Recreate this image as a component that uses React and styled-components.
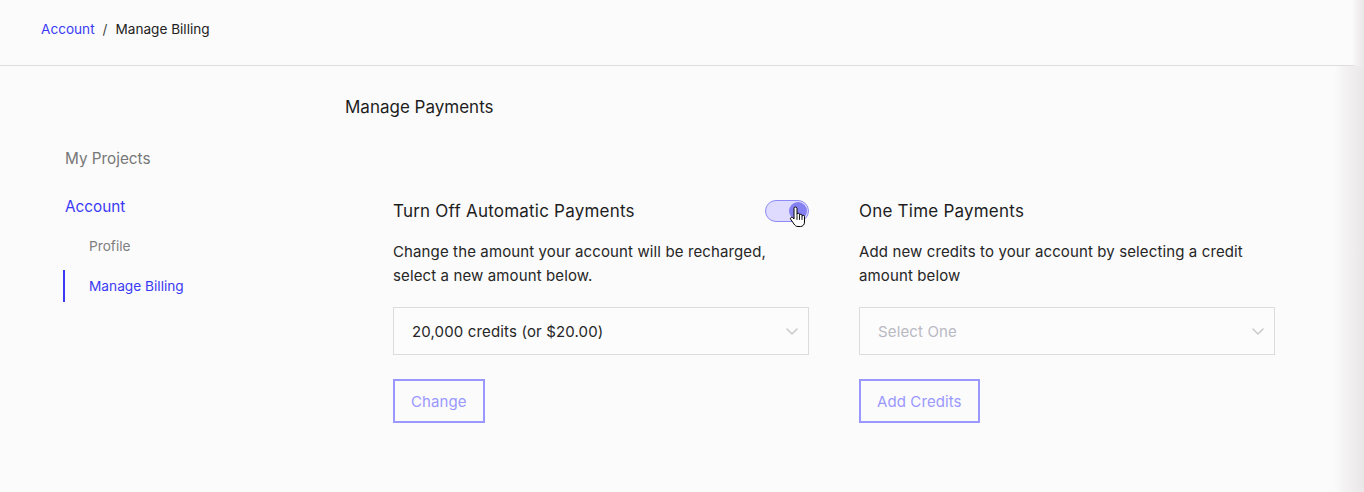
import styled, { createGlobalStyle } from "styled-components";

const GlobalStyle = createGlobalStyle`
  html, body {
    margin: 0;
    padding: 0;
    background: #fbfbfb;
    font-family: Inter, "Liberation Sans", sans-serif;
    -webkit-font-smoothing: antialiased;
  }
  * { box-sizing: border-box; }
`;

const BLUE = "#3a3af4";
const SOFT = "#9a98ff";

const Page = styled.div`
  position: relative;
  width: 1364px;
  height: 492px;
  overflow: hidden;
  background: #fbfbfb;
`;

const Header = styled.header`
  height: 66px;
  border-bottom: 1px solid #dddddd;
  display: flex;
  align-items: center;
  padding: 0 0 8px 41px;
  font-size: 13.6px;
  color: #222;
`;

const Crumb = styled.span`
  color: ${(p) => (p.$link ? BLUE : "#222")};
`;

const Slash = styled.span`
  margin: 0 8px;
  color: #444;
`;

const Body = styled.div`
  display: flex;
`;

const Sidebar = styled.nav`
  width: 345px;
  padding: 83px 0 0 63px;
  display: flex;
  flex-direction: column;
`;

const NavHeading = styled.div`
  font-size: 15.3px;
  line-height: 20px;
  padding-left: 2px;
  margin-bottom: ${(p) => p.$mb || 0}px;
  color: ${(p) => (p.$active ? BLUE : "#777")};
`;

const NavItem = styled.div`
  font-size: 13.7px;
  line-height: 20px;
  padding: 6px 0 6px 24px;
  border-left: 2px solid ${(p) => (p.$active ? BLUE : "transparent")};
  color: ${(p) => (p.$active ? BLUE : "#808080")};
  margin-top: ${(p) => p.$mt || 0}px;
`;

const Main = styled.main`
  flex: 1;
  padding-top: 31px;
`;

const PageTitle = styled.h1`
  margin: 0;
  font-size: 17px;
  line-height: 20px;
  font-weight: 400;
  color: #1e1e1e;
`;

const Columns = styled.div`
  display: grid;
  grid-template-columns: 416px 416px;
  column-gap: 50px;
  margin: 83px 0 0 48px;
`;

const Column = styled.section`
  display: flex;
  flex-direction: column;
  align-items: flex-start;
`;

const TitleRow = styled.div`
  position: relative;
  width: 100%;
  height: 22px;
  display: flex;
  align-items: center;
  justify-content: space-between;
`;

const ColumnTitle = styled.h2`
  margin: 0;
  font-size: 17px;
  letter-spacing: 0.22px;
  font-weight: 400;
  color: #1e1e1e;
`;

const Toggle = styled.div`
  width: 44px;
  height: 22px;
  border-radius: 11px;
  border: 1px solid #8e8bf6;
  background: #dedbff;
  display: flex;
  align-items: center;
  justify-content: flex-end;
  padding: 1px;
`;

const Knob = styled.div`
  width: 18px;
  height: 18px;
  border-radius: 50%;
  background: #8581f2;
`;

const Cursor = styled.svg`
  position: absolute;
  right: 3px;
  top: 6px;
`;

const Description = styled.p`
  margin: 18px 0 0;
  font-size: 15px;
  letter-spacing: 0.12px;
  line-height: 24px;
  color: #262626;
`;

const Select = styled.div`
  width: 100%;
  height: 48px;
  margin-top: 19px;
  border: 1px solid #dcdcdc;
  background: #fcfcfc;
  display: flex;
  align-items: center;
  justify-content: space-between;
  padding: 0 9px 0 18px;
  font-size: 15px;
  letter-spacing: 0.15px;
  color: ${(p) => (p.$placeholder ? "#b9b9c3" : "#262626")};
`;

const Button = styled.button`
  margin-top: 24px;
  height: 44px;
  padding: 0 16px;
  border: 2px solid ${SOFT};
  background: transparent;
  font-family: inherit;
  font-size: 15px;
  letter-spacing: 0.1px;
  color: ${SOFT};
  cursor: pointer;
`;

const EdgeShade = styled.div`
  position: absolute;
  top: ${(p) => p.$top}px;
  bottom: ${(p) => p.$bottom}px;
  right: 0;
  width: ${(p) => p.$w}px;
  background: linear-gradient(to right, rgba(235, 233, 234, 0), #f3f1f2 40%, #e9e7e8);
  pointer-events: none;
`;

function Chevron() {
  return (
    <svg width="14" height="14" viewBox="0 0 14 14" fill="none">
      <path d="M2 5l5 5 5-5" stroke="#cbcbcb" strokeWidth="1.6" strokeLinecap="round" strokeLinejoin="round" />
    </svg>
  );
}

function HandCursor() {
  return (
    <Cursor width="17" height="22" viewBox="0 0 17 22">
      <path
        d="M5 2.5a1.5 1.5 0 0 1 3 0V8.5a1.25 1.25 0 0 1 2.5 0V9.5a1.25 1.25 0 0 1 2.5 0V10.5a1.25 1.25 0 0 1 2.5 0V16c0 2.6-1.6 4.5-4 4.5H9c-2 0-3-1-4-2.5L1.6 13.2a1.3 1.3 0 0 1 2-1.6L5 13Z"
        fill="#fff"
        stroke="#000"
        strokeWidth="1"
        strokeLinejoin="round"
      />
      <path d="M8 9.5v4M10.5 10v3.5M13 11v2.5" stroke="#000" strokeWidth="0.9" strokeLinecap="round" />
    </Cursor>
  );
}

export default function App() {
  return (
    <Page>
      <GlobalStyle />
      <Header>
        <Crumb $link>Account</Crumb>
        <Slash>/</Slash>
        <Crumb>Manage Billing</Crumb>
      </Header>
      <Body>
        <Sidebar>
          <NavHeading $mb={28}>My Projects</NavHeading>
          <NavHeading $active>Account</NavHeading>
          <NavItem $mt={13}>Profile</NavItem>
          <NavItem $mt={8} $active>Manage Billing</NavItem>
        </Sidebar>
        <Main>
          <PageTitle>Manage Payments</PageTitle>
          <Columns>
            <Column>
              <TitleRow>
                <ColumnTitle>Turn Off Automatic Payments</ColumnTitle>
                <Toggle>
                  <Knob />
                </Toggle>
                <HandCursor />
              </TitleRow>
              <Description>
                Change the amount your account will be recharged,
                <br />
                select a new amount below.
              </Description>
              <Select>
                20,000 credits (or $20.00)
                <Chevron />
              </Select>
              <Button>Change</Button>
            </Column>
            <Column>
              <TitleRow>
                <ColumnTitle>One Time Payments</ColumnTitle>
              </TitleRow>
              <Description>
                Add new credits to your account by selecting a credit
                <br />
                amount below
              </Description>
              <Select $placeholder>
                Select One
                <Chevron />
              </Select>
              <Button>Add Credits</Button>
            </Column>
          </Columns>
        </Main>
      </Body>
      <EdgeShade $top={0} $bottom={426} $w={12} />
      <EdgeShade $top={66} $bottom={0} $w={30} />
    </Page>
  );
}
